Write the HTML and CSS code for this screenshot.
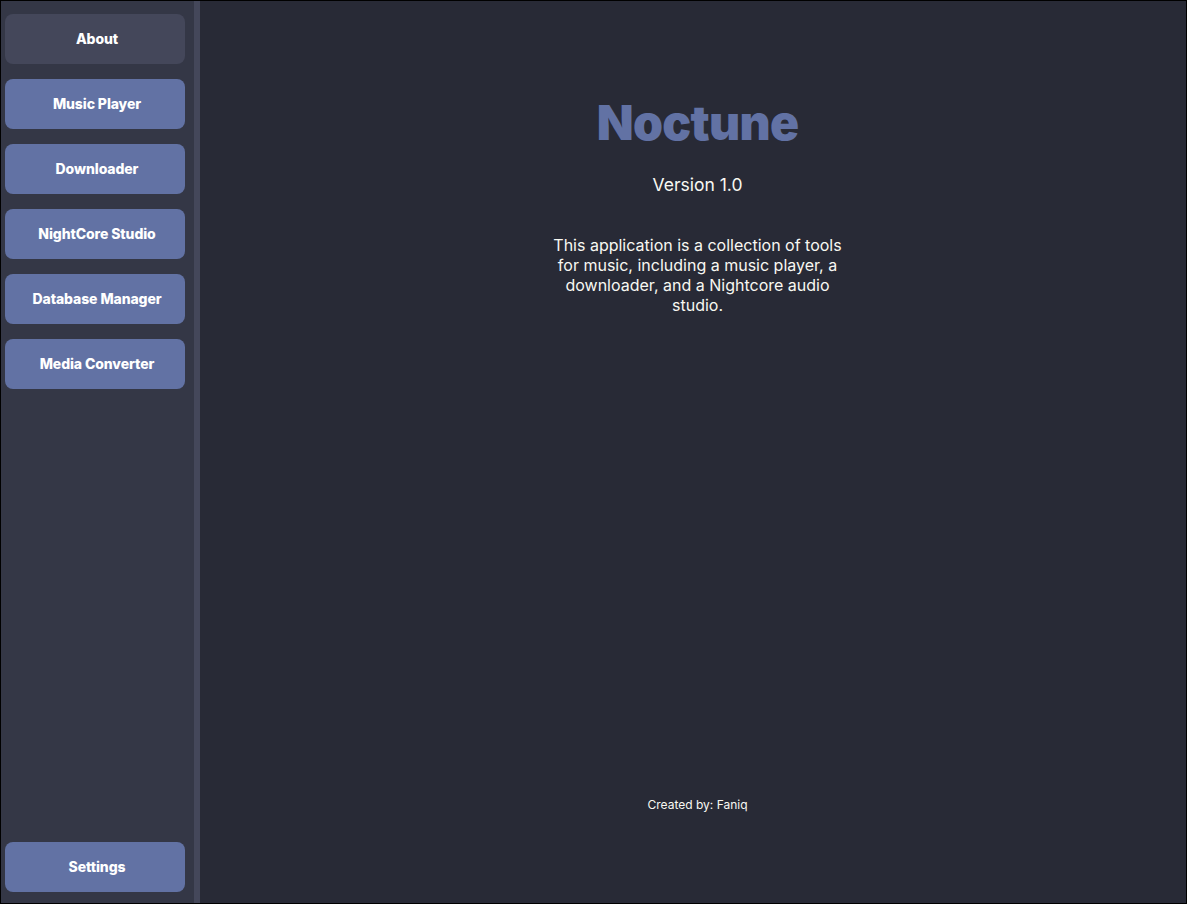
FILE: index.html
```html
<!DOCTYPE html>
<html lang="en">
<head>
    <meta charset="UTF-8">
    <meta name="viewport" content="width=device-width, initial-scale=1.0">
    <title>Noctune</title>
    <link rel="stylesheet" href="styles.css">
</head>
<body>
    <div class="window">
        <nav class="sidebar">
            <div class="nav-top">
                <button class="nav-btn active">About</button>
                <button class="nav-btn">Music Player</button>
                <button class="nav-btn">Downloader</button>
                <button class="nav-btn">NightCore Studio</button>
                <button class="nav-btn">Database Manager</button>
                <button class="nav-btn">Media Converter</button>
            </div>
            <button class="nav-btn">Settings</button>
        </nav>
        <div class="divider"></div>
        <main class="content">
            <h1 class="title">Noctune</h1>
            <p class="version">Version 1.0</p>
            <p class="desc">This application is a collection of tools for music, including a music player, a downloader, and a Nightcore audio studio.</p>
            <p class="credit">Created by: Faniq</p>
        </main>
    </div>
</body>
</html>
```

FILE: styles.css
```css
html, body { margin: 0; height: 100%; }
body { font-family: Inter, "Noto Sans", sans-serif; background: #000; }
.window { display: flex; height: 902px; margin: 1px; background: #282a36; }
.sidebar { width: 180px; padding: 13px 9px 11px 4px; background: #343746; display: flex; flex-direction: column; justify-content: space-between; }
.nav-top { display: flex; flex-direction: column; gap: 15px; }
.nav-btn { height: 50px; width: 180px; padding: 0 0 2px 4px; border: none; border-radius: 8px; background: #6272a4; color: #fff; font-family: inherit; font-size: 14px; font-weight: 800; letter-spacing: -0.1px; cursor: pointer; }
.nav-btn.active { background: #44475a; }
.divider { width: 6px; background: #44475a; }
.content { flex: 1; padding-left: 9px; display: flex; flex-direction: column; align-items: center; color: #f8f8f2; }
.title { margin: 90px 0 0; font-size: 48px; font-weight: 900; color: #6272a4; line-height: 64px; letter-spacing: -0.7px; }
.version { margin: 19px 0 0; font-size: 17.5px; line-height: 22px; }
.desc { margin: 39px 0 0; max-width: 300px; text-align: center; font-size: 16px; line-height: 20px; }
.credit { margin: auto 0 91px; font-size: 12px; }
```
